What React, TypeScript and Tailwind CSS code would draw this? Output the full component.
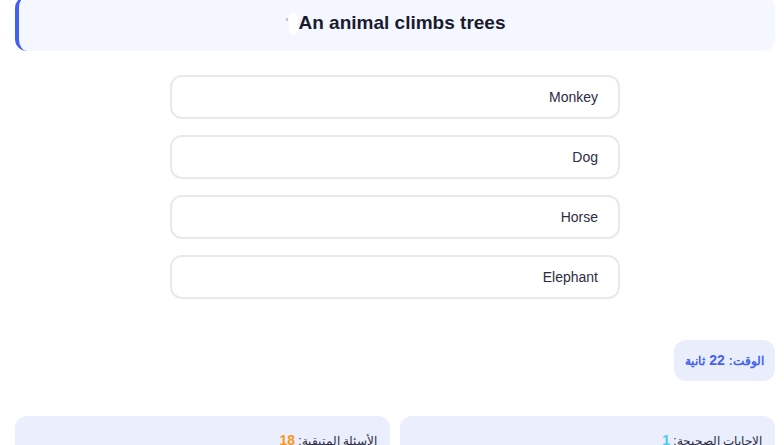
import React from 'react';

const options = ['Monkey', 'Dog', 'Horse', 'Elephant'];

const App = () => {
  return (
    <div
      dir="rtl"
      className="h-screen bg-white pl-[15px] pr-[9px] overflow-hidden"
      style={{ fontFamily: '"Liberation Sans", Arial, sans-serif' }}
    >
      {/* Question header */}
      <div
        dir="ltr"
        className="-mt-[4px] h-[55px] rounded-xl border-l-4 border-[#4361ee] bg-[#f4f7ff] flex items-center justify-center"
      >
        <span className="relative mr-[1px] h-[22px] w-[9px] rounded-full bg-white">
          <span className="absolute -left-[3px] top-[5px] h-[3px] w-[2px] rounded-full bg-[#b8bccb]" />
        </span>
        <h2 className="text-[19px] font-bold text-[#1b1b2f]">An animal climbs trees</h2>
      </div>

      {/* Options */}
      <div className="mt-[24px] mx-auto w-[450px] flex flex-col gap-[16px]">
        {options.map(o => (
          <button
            key={o}
            className="h-[44px] w-full rounded-xl border-2 border-[#e7e9ee] bg-white px-[20px] text-right text-[14px] text-[#2b2d42]"
          >
            {o}
          </button>
        ))}
      </div>

      {/* Timer */}
      <div className="mt-[41px] flex">
        <div className="h-[41px] w-[101px] rounded-xl bg-[#e9edfc] flex items-center justify-center text-[12px] font-bold text-[#4361ee]">
          الوقت: <span className="mx-[4px] text-[14px]">22</span> ثانية
        </div>
      </div>

      {/* Stats */}
      <div className="mt-[35px] grid grid-cols-2 gap-[10px]">
        <div className="h-[60px] rounded-xl bg-[#ebeefc] px-[13px] pt-[14px] text-[12px] text-[#2b2d42]">
          الإجابات الصحيحة: <span className="text-[14px] font-bold text-[#4cc9f0]">1</span>
        </div>
        <div className="h-[60px] rounded-xl bg-[#ebeefc] px-[13px] pt-[14px] text-[12px] text-[#2b2d42]">
          الأسئلة المتبقية: <span className="text-[14px] font-bold text-[#f8961e]">18</span>
        </div>
      </div>
    </div>
  );
};

export default App;
